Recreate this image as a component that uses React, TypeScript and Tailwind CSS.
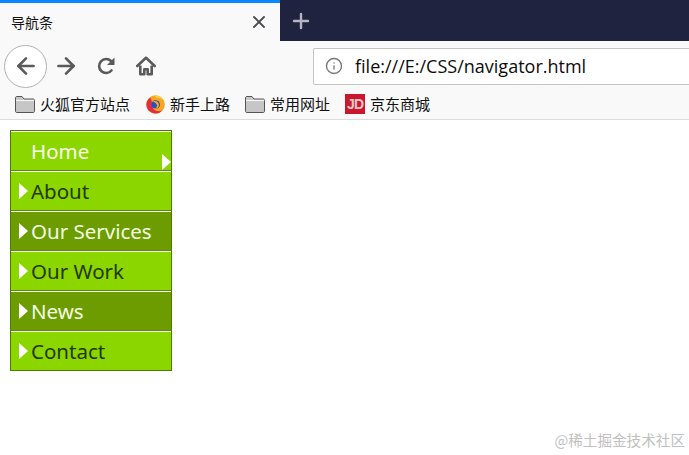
import React from 'react';
import { X, Plus, ArrowLeft, ArrowRight, Info } from 'lucide-react';

const CJK = 'font-["Noto_Sans","Noto_Sans_CJK_SC",sans-serif]';

const Folder = () => (
  <svg width="20" height="20" viewBox="0 0 20 20" className="shrink-0">
    <path d="M.5 4C.5 3 1 2.500 2 2.500h5L9 5h9c1 0 1.500.5 1.500 1.500V17c0 1-.5 1.500-1.500 1.500H2c-1 0-1.500-.5-1.500-1.500V4z" fill="#c6c6c6" stroke="#555" strokeWidth="1" />
    <path d="M1 6.500H19" stroke="#f4f4f4" strokeWidth="1.200" />
  </svg>
);

const Firefox = () => (
  <svg width="19" height="19" viewBox="0 0 19 19" className="shrink-0">
    <circle cx="9.500" cy="9.500" r="9.300" fill="#f9a51f" />
    <path d="M.5 8.500a9 9 0 0 0 16 6.500c-2.500 1.800-6.500 1.500-8.500-.5C6.500 13 6 11 7.500 10L6 7 4.500 2.500C2 4 .8 6 .5 8.500z" fill="#e22c3f" />
    <circle cx="9.700" cy="9.500" r="4.300" fill="#2a4fc4" />
    <path d="M7 6.500c3-1.500 6 .5 6 3.500s-3 4.500-5.500 3.500c2 0 3.500-1 3.500-2.800S9 7.500 7 6.500z" fill="#f9a51f" />
    <path d="M9 .3c3.500.1 6.500 2 8 5-1.800-1.800-4-2.800-7-2.800z" fill="#fcd835" />
  </svg>
);

const JdLogo = () => (
  <div className="w-5 h-5 bg-[#c9172c] text-[#f3c6cb] text-[14px] font-bold flex items-center justify-center shrink-0 font-['Liberation_Sans',sans-serif] tracking-[-1px]">
    JD
  </div>
);

const Reload = () => (
  <svg width="20" height="20" viewBox="0 0 20 20" fill="none">
    <path d="M15.500 14.500A7 7 0 1 1 15 5" stroke="#5a5a5c" strokeWidth="2.600" strokeLinecap="round" />
    <path d="M18.500 1.500v7.500h-7.500z" fill="#5a5a5c" />
  </svg>
);

const Home = () => (
  <svg width="20" height="20" viewBox="0 0 20 20" fill="none" stroke="#5a5a5c" strokeWidth="2.600" strokeLinejoin="round">
    <path d="M1.300 10 10 1.800l8.700 8.200" strokeLinecap="round" />
    <path d="M4.300 9.500v8.700h4v-5h3.400v5h4V9.500" />
  </svg>
);

const Bookmark = ({ icon, label, className = '' }: { icon: React.ReactNode; label: string; className?: string }) => (
  <div className={`flex items-center gap-[5px] ${className}`}>
    {icon}
    <span className="text-[15px] text-[#111] leading-5">{label}</span>
  </div>
);

const MENU = [
  { label: 'Home', current: true },
  { label: 'About' },
  { label: 'Our Services', hover: true },
  { label: 'Our Work' },
  { label: 'News', dark: true },
  { label: 'Contact' },
];

const Arrow = () => <span className="block w-0 h-0 border-y-[8px] border-y-transparent border-l-[9px] border-l-white" />;

const App: React.FC = () => {
  return (
    <div className={`relative w-[689px] h-[455px] bg-white overflow-hidden ${CJK}`}>
      {/* Tab strip */}
      <div className="h-[41px] bg-[#202340] flex">
        <div className="w-[280px] bg-[#f9f9fa] border-t-[3px] border-[#0a84ff] flex items-center justify-between pl-[11px] pr-[11px]">
          <span className="text-[14px] text-[#111]">导航条</span>
          <X size={20} color="#4a4a4f" strokeWidth={2.200} />
        </div>
        <div className="flex items-center pl-[9px]">
          <Plus size={24} color="#b4b5c0" strokeWidth={2.400} />
        </div>
      </div>

      {/* Toolbar */}
      <div className="h-[49px] bg-[#f9f9fa] flex items-center pl-1 pt-[1px]">
        <div className="w-[43px] h-[43px] rounded-full border border-[#b1b1b3] bg-white flex items-center justify-center">
          <ArrowLeft size={26} color="#5a5a5c" strokeWidth={2.400} />
        </div>
        <ArrowRight size={26} color="#5a5a5c" strokeWidth={2.400} className="ml-[6px]" />
        <div className="ml-[17px]">
          <Reload />
        </div>
        <div className="ml-[20px]">
          <Home />
        </div>
        <div className="ml-[157px] flex-1 h-[37px] bg-white border border-[#c4c4c4] border-r-0 rounded-l-[2px] flex items-center pl-[11px]">
          <Info size={18} color="#77777a" strokeWidth={1.800} />
          <span className="ml-[12px] text-[18px] text-[#0c0c0d] font-['Open_Sans',sans-serif]">file:///E:/CSS/navigator.html</span>
        </div>
      </div>

      {/* Bookmarks */}
      <div className="h-[30px] bg-[#f9f9fa] border-b border-[#dcdcdc] flex items-center pl-[15px] pb-[1px]">
        <Bookmark icon={<Folder />} label="火狐官方站点" />
        <Bookmark icon={<Firefox />} label="新手上路" className="ml-[16px]" />
        <Bookmark icon={<Folder />} label="常用网址" className="ml-[15px]" />
        <Bookmark icon={<JdLogo />} label="京东商城" className="ml-[15px]" />
      </div>

      {/* Nav menu */}
      <ul className="mt-[10px] ml-[10px] w-[162px] h-[241px] overflow-hidden border border-[#4c7c00] bg-[#8cd600] font-['Noto_Sans',sans-serif]">
        {MENU.map((item, i) => (
          <li
            key={item.label}
            className={`relative h-10 flex items-center pl-5 border-t border-white text-[20.500px] ${item.hover || item.dark ? 'bg-[#6c9c00] text-[#f2ffe4]' : item.current ? 'text-[#f8ffee]' : 'text-[#223800]'} ${i === MENU.length - 1 ? '' : 'shadow-[inset_0_-1px_0_#5c8c00]'}`}
          >
            {!item.current && (
              <span className="absolute left-2 top-[11px]">
                <Arrow />
              </span>
            )}
            {item.current && (
              <span className="absolute right-0 top-[22px]">
                <Arrow />
              </span>
            )}
            <span className="leading-none">{item.label}</span>
          </li>
        ))}
      </ul>

      {/* Watermark */}
      <div className="absolute right-[4px] bottom-[4px] text-[14.600px] text-[#c0c0c0] font-['Noto_Sans_CJK_SC',sans-serif]">@稀土掘金技术社区</div>
    </div>
  );
};

export default App;
